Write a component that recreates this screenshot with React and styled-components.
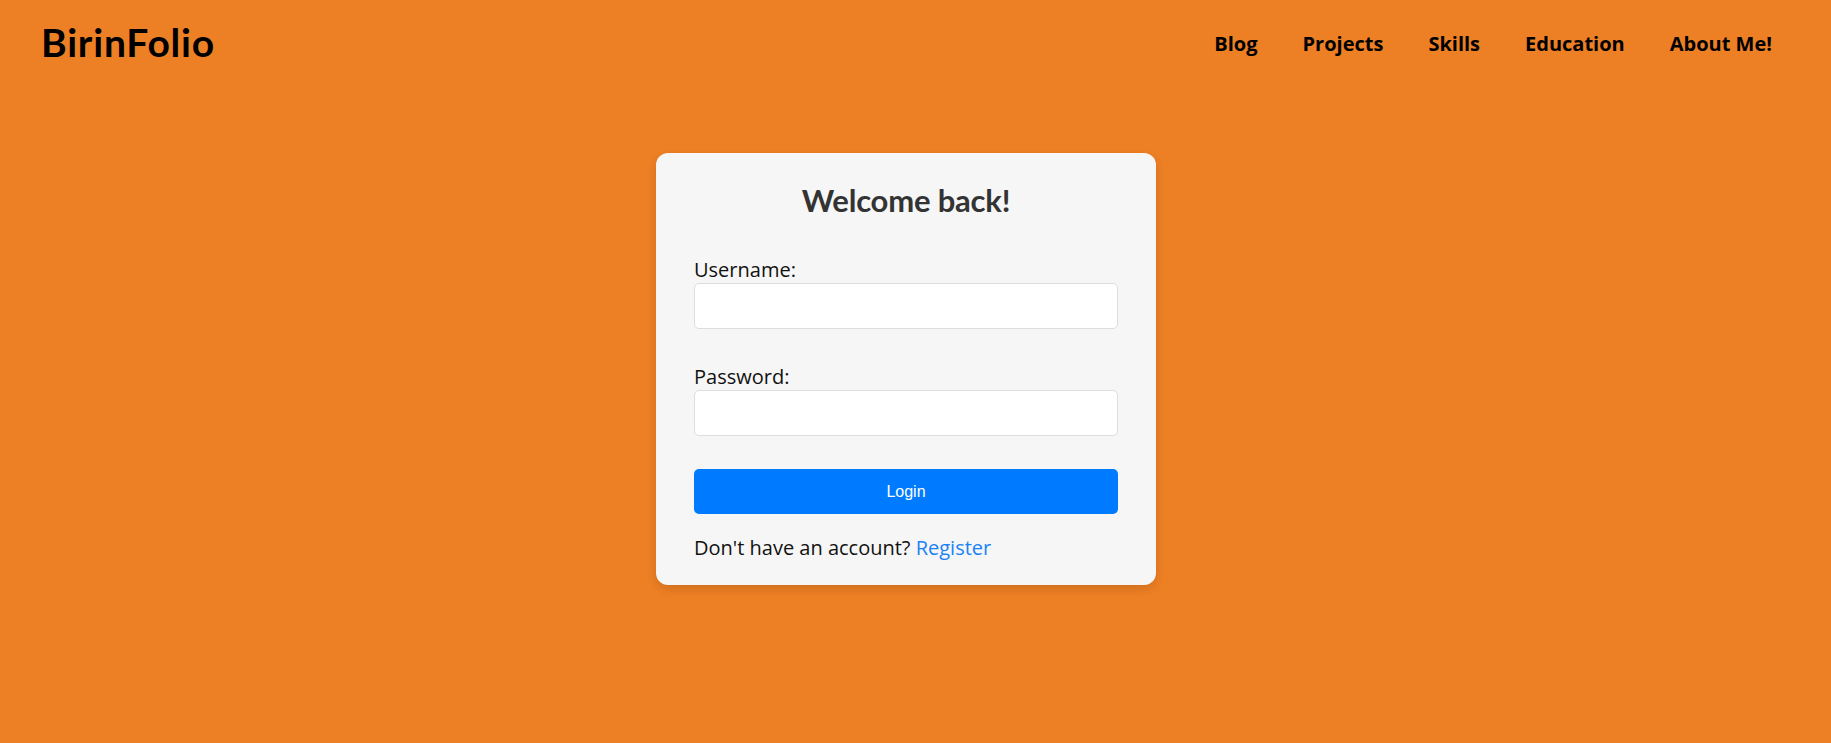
import React from 'react'
import styled, { createGlobalStyle } from 'styled-components'

const GlobalStyle = createGlobalStyle`
  * {
    box-sizing: border-box;
  }
  body {
    margin: 0;
    background: #ed7f24;
    font-family: 'Open Sans', 'Liberation Sans', sans-serif;
  }
`

function App() {
  return (
    <Page>
      <GlobalStyle />
      <Header>
        <Logo>BirinFolio</Logo>
        <Nav>
          <NavLink href="#">Blog</NavLink>
          <NavLink href="#">Projects</NavLink>
          <NavLink href="#">Skills</NavLink>
          <NavLink href="#">Education</NavLink>
          <NavLink href="#">About Me!</NavLink>
        </Nav>
      </Header>
      <Main>
        <Card>
          <Title>Welcome back!</Title>
          <Form onSubmit={(e) => e.preventDefault()}>
            <Field>
              <Label htmlFor="username">Username:</Label>
              <Input id="username" type="text" />
            </Field>
            <Field>
              <Label htmlFor="password">Password:</Label>
              <Input id="password" type="password" />
            </Field>
            <Button type="submit">Login</Button>
          </Form>
          <Footer>
            Don't have an account? <Link href="#">Register</Link>
          </Footer>
        </Card>
      </Main>
    </Page>
  )
}

export default App

const Page = styled.div`
  min-height: 743px;
  background: #ed7f24;
`

const Header = styled.header`
  height: 83px;
  display: flex;
  align-items: center;
  justify-content: space-between;
  padding: 0 59px 0 41px;
`

const Logo = styled.div`
  font-family: 'Lato', 'Liberation Sans', sans-serif;
  font-weight: 700;
  font-size: 39px;
  letter-spacing: 0.8px;
  color: #000;
`

const Nav = styled.nav`
  display: flex;
  gap: 45px;
  padding-top: 3px;
`

const NavLink = styled.a`
  font-family: 'Open Sans', 'Liberation Sans', sans-serif;
  font-weight: 700;
  font-size: 20px;
  color: #000;
  text-decoration: none;
`

const Main = styled.main`
  display: flex;
  justify-content: center;
  padding: 70px 19px 0 0;
`

const Card = styled.div`
  width: 500px;
  background: #f6f6f6;
  border-radius: 12px;
  padding: 28px 38px 23px;
  box-shadow: 0 4px 10px rgba(0, 0, 0, 0.12);
`

const Title = styled.h2`
  margin: 0 0 36px;
  text-align: center;
  font-family: 'Lato', 'Liberation Sans', sans-serif;
  font-weight: 700;
  font-size: 31px;
  line-height: 39px;
  letter-spacing: -0.2px;
  color: #333;
`

const Form = styled.form`
  display: flex;
  flex-direction: column;
`

const Field = styled.div`
  display: flex;
  flex-direction: column;
  margin-bottom: 34px;
`

const Label = styled.label`
  font-size: 20px;
  line-height: 27.2px;
  color: #111;
`

const Input = styled.input`
  height: 46px;
  width: 100%;
  border: 1px solid #ddd;
  border-radius: 5px;
  background: #fff;
  padding: 0 12px;
  font-size: 16px;
  outline: none;
`

const Button = styled.button`
  height: 45px;
  width: 100%;
  margin-top: -1px;
  border: none;
  border-radius: 5px;
  background: #007bff;
  color: #fff;
  font-family: 'Liberation Sans', Arial, sans-serif;
  font-size: 16px;
  cursor: pointer;
`

const Footer = styled.p`
  margin: 20px 0 0;
  font-size: 20px;
  line-height: 27.2px;
  color: #111;
`

const Link = styled.a`
  color: #1a82f5;
  text-decoration: none;
`
